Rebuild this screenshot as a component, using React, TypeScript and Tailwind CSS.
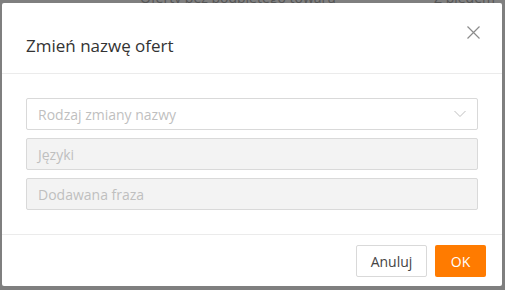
import React from "react";

export default function App() {
  const font = { fontFamily: '"Segoe UI", "Open Sans", "Noto Sans", sans-serif' };
  return (
    <div
      className="relative w-[505px] h-[290px] overflow-hidden bg-[#7f7f7f]"
      style={font}
    >
      {/* dimmed page behind */}
      <div className="flex h-[3px] items-end text-[14px] text-[#555] leading-none">
        <span className="ml-[140px] whitespace-nowrap -mb-[2px]">Oferty bez podpiętego towaru</span>
        <span className="ml-auto mr-[10px] whitespace-nowrap -mb-[2px]">Z błędem</span>
      </div>
      <div className="pl-[2px]">
        <div className="relative flex w-[500px] h-[283px] flex-col rounded-[2px] bg-white">
          <div className="h-[71px] border-b border-[#ebebeb] pl-[24px] pt-[31px]">
            <h2 className="text-[17px] leading-[24px] text-[#333]">Zmień nazwę ofert</h2>
          </div>
          <button className="absolute right-[21px] top-[21px] flex h-[16px] w-[16px] items-center justify-center text-[#8c8c8c]">
            <svg width="13" height="13" viewBox="0 0 13 13" fill="none" stroke="currentColor" strokeWidth="1.2">
              <path d="M0.5 0.5 L12.5 12.5 M12.5 0.5 L0.5 12.5" />
            </svg>
          </button>
          <div className="flex flex-col gap-[8px] border-b border-[#ebebeb] px-[24px] pt-[24px] pb-[24px]">
            <div className="flex h-[32px] items-center justify-between rounded-[2px] border border-[#d9d9d9] bg-white pl-[11px] pr-[11px]">
              <span className="text-[14px] text-[#bfbfbf]">Rodzaj zmiany nazwy</span>
              <svg width="12" height="8" viewBox="0 0 12 8" fill="none" stroke="#bfbfbf" strokeWidth="1">
                <path d="M0.5 1 L6 6.5 L11.5 1" />
              </svg>
            </div>
            <div className="flex h-[32px] items-center rounded-[2px] border border-[#d9d9d9] bg-[#f3f3f3] pl-[11px]">
              <span className="text-[14px] text-[#bfbfbf]">Języki</span>
            </div>
            <div className="flex h-[32px] items-center rounded-[2px] border border-[#d9d9d9] bg-[#f3f3f3] pl-[11px]">
              <span className="text-[14px] text-[#bfbfbf]">Dodawana fraza</span>
            </div>
          </div>
          <div className="flex flex-1 items-start justify-end gap-[8px] pr-[16px] pt-[10px]">
            <button className="h-[32px] w-[71px] rounded-[2px] border border-[#d9d9d9] bg-white text-[14px] text-[#444]">
              Anuluj
            </button>
            <button className="h-[32px] w-[51px] rounded-[2px] bg-[#ff7b00] text-[14px] text-white">
              OK
            </button>
          </div>
        </div>
      </div>
    </div>
  );
}
